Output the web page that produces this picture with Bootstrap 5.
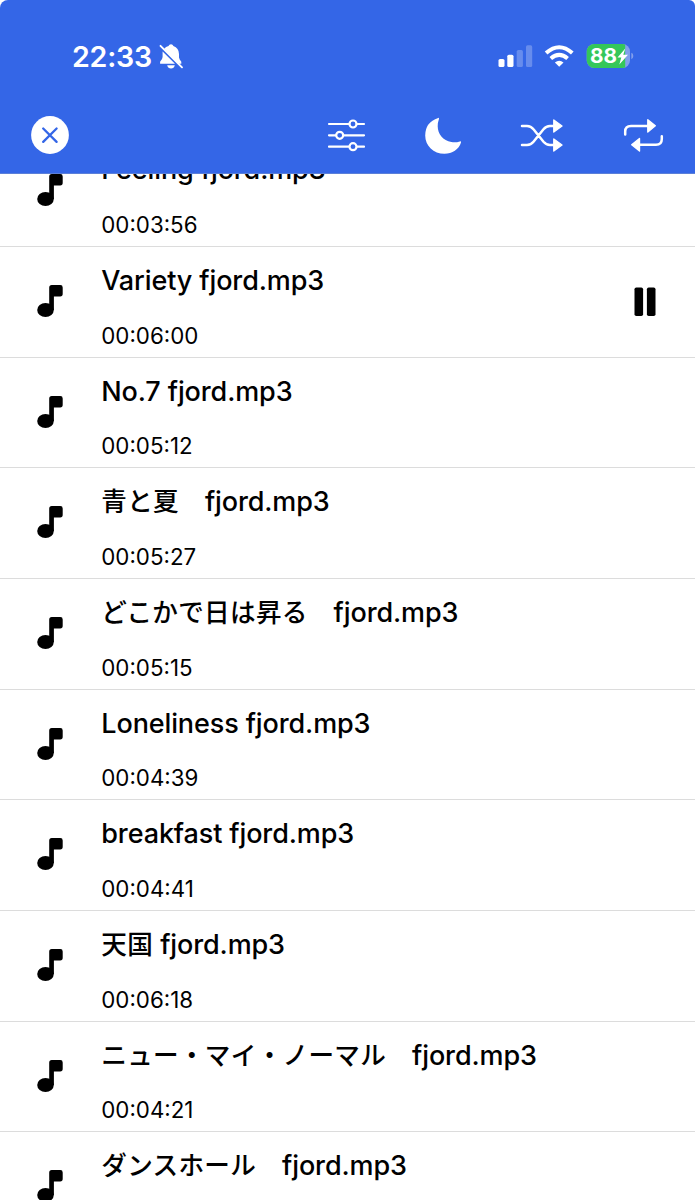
<!DOCTYPE html>
<html lang="ja">
<head>
<meta charset="utf-8">
<meta name="viewport" content="width=device-width, initial-scale=1">
<title>Music</title>
<link href="https://cdn.jsdelivr.net/npm/bootstrap@5.3.0/dist/css/bootstrap.min.css" rel="stylesheet">
<style>
body{font-family:Inter,"Noto Sans CJK JP",sans-serif;color:#000;background:#fff;height:1200px}
.screen{width:695px;height:1200px}
.top-bar{height:174px;background:#3466e7;border-top-left-radius:8px;border-top-right-radius:6px;border-bottom:1px solid #5b7fd8;z-index:2}
.status{height:84px;padding:28px 61px 0 72px}
.clock{font-size:28.6px;font-weight:600;line-height:57px;letter-spacing:-.25px;width:82px;white-space:nowrap}
.tools{height:90px;padding:7px 31px 0}
.tool{border:0;background:none;color:#fff;padding:0;line-height:0}
.tracks{margin-top:-37.6px}
.track{height:110.67px;border:0;border-bottom:1.4px solid #dcdcdc;border-radius:0;padding:0 39px 0 36px;color:#000;background:#fff}
.note{margin-top:37px;width:28px}
.track-text{margin-left:37.3px}
.track-name{font-size:27px;font-weight:500;line-height:36px;height:36px;margin-top:16px;white-space:pre;letter-spacing:-.12px}
.jp{font-size:25.6px;font-weight:500;line-height:1;letter-spacing:.3px}
.track-time{font-size:22.3px;line-height:30px;margin-top:21.5px;letter-spacing:0}
.pause{margin-top:40.4px}
svg{display:block;flex:none}
</style>
</head>
<body>
<svg width="0" height="0" class="position-absolute"><defs>
<symbol id="note" viewBox="0 0 28 34"><ellipse cx="9.5" cy="26" rx="8.3" ry="7"/><path d="M13.2 26V3.5Q13.2 1 15.7 1H24.3Q26.7 1 26.7 3.4V9.8Q26.7 12.4 24.2 12.4H17.9V26Z"/></symbol>
</defs></svg>
<div class="screen d-flex flex-column overflow-hidden">
<header class="top-bar position-relative flex-shrink-0 text-white">
 <div class="status d-flex align-items-start">
  <div class="clock">22:33</div>
  <svg style="margin:15px 0 0 3px" width="28" height="28" viewBox="0 0 28 28" fill="#fff"><path d="M7.2 5.8Q8.8 3.6 11.5 3Q12.2 1.2 14 1.2Q15.8 1.2 16.4 3Q21.8 4.8 22 11V14.5Q22.3 16.3 24.3 18.7V20.7H21.2ZM5.6 8.4L18 20.7H3.1V18.7Q5.5 16.4 5.6 14Z"/><path d="M10.2 22.3H17.8Q17 25.6 14 25.6Q11 25.6 10.2 22.3Z"/><path d="M3.5 2.8L25 24.3" stroke="#fff" stroke-width="1.9" stroke-linecap="round"/></svg>
  <div class="d-flex ms-auto" style="margin-top:15px">
   <svg width="35" height="26" viewBox="498 43 35 26" fill="#fff"><rect x="498.5" y="59" width="6" height="8" rx="1.6"/><rect x="507.3" y="54.7" width="6.2" height="12.3" rx="1.6"/><g opacity=".25"><rect x="516.7" y="50" width="6.2" height="17" rx="1.6"/><rect x="526" y="45.3" width="6.2" height="21.7" rx="1.6"/></g></svg>
   <svg style="margin-left:11px" width="31" height="26" viewBox="544 43 31 26" fill="none" stroke="#fff" stroke-width="4"><path d="M546.1 53.1Q559.2 41.4 572.3 53.1M550.8 58.5Q559.2 51.3 567.6 58.5"/><path d="M554.9 62.6Q559.2 58.9 563.5 62.6L559.2 66.8Z" fill="#fff" stroke="none"/></svg>
   <svg style="margin-left:11px" width="48" height="26" viewBox="586 43 48 26"><defs><clipPath id="bat"><rect x="586.7" y="44" width="43.3" height="24" rx="7.5"/></clipPath></defs><g clip-path="url(#bat)"><rect x="586" y="43" width="44" height="26" fill="#829fec"/><rect x="586" y="43" width="39.2" height="26" fill="#34c759"/></g><path d="M631.3 52.7Q633.3 53.3 633.3 56Q633.3 58.7 631.3 59.3Z" fill="#829fec"/><text x="590" y="63.3" font-family="Inter" font-weight="700" font-size="20.3" textLength="27" lengthAdjust="spacingAndGlyphs" fill="#fff">88</text><path d="M625.3 48.5L617.5 57.5H621.3L619.3 64.5L628 54.7H623.3Z" fill="#fff"/></svg>
  </div>
 </div>
 <nav class="tools d-flex align-items-start">
  <button class="tool" style="margin-top:25px" aria-label="閉じる"><svg width="38" height="38" viewBox="0 0 38 38"><circle cx="19" cy="19" r="18.9" fill="#fff"/><path d="M12.2 12.5L25.6 25.9M25.6 12.5L12.2 25.9" stroke="#3466e7" stroke-width="2.3" stroke-linecap="round"/></svg></button>
  <button class="tool" style="margin:26px 0 0 258px" aria-label="イコライザー"><svg width="40" height="36" viewBox="327 117 40 36" fill="#3466e7" stroke="#fff" stroke-width="2.2" stroke-linecap="round"><path d="M329 124H364M329 135.3H364M329 146.7H364"/><circle cx="353" cy="124" r="3.5"/><circle cx="339.7" cy="135.3" r="3.5"/><circle cx="353" cy="146.7" r="3.5"/></svg></button>
  <button class="tool" style="margin:26px 0 0 57px" aria-label="ダークモード"><svg width="38" height="38" viewBox="424 117 38 38"><path d="M438.2 117.9Q425.2 122.2 425.2 135.4C425.2 145.7 433.5 153.8 444.5 153.8C452.2 153.8 458.9 149.4 461 142.5Q461.3 141 459.8 141.4Q455.5 142.8 451.4 142C443 140.5 437.7 134 437.7 126.2Q437.7 122.3 438.9 119.2Q439.3 117.5 438.2 117.9Z" fill="#fff"/></svg></button>
  <button class="tool" style="margin:26px 0 0 58px" aria-label="シャッフル"><svg width="44" height="38" viewBox="520 117 44 38" fill="none" stroke="#fff" stroke-width="2.5" stroke-linecap="round"><path d="M522 126H527Q531 126 533.5 129.3L543.5 141.8Q546.2 145 550 145H554M522 145H527Q531 145 533.5 141.8L543.5 129.3Q546.2 126 550 126H554"/><path d="M553.8 120L562 126L553.8 132ZM553.8 139L562 145L553.8 151Z" fill="#fff" stroke-width="1.4" stroke-linejoin="round"/></svg></button>
  <button class="tool" style="margin:26px 0 0 59px" aria-label="リピート"><svg width="42" height="38" viewBox="623 117 42 38" fill="none" stroke="#fff" stroke-width="2.5" stroke-linecap="round"><path d="M625.2 134.5V131.5Q625.2 126 631 126H648M661.8 136.2V139Q661.8 144.8 656 144.8H639"/><path d="M647.8 119.7L655.3 125.7L647.8 132ZM639.5 138.5L631.7 144.8L639.5 151Z" fill="#fff" stroke-width="1.4" stroke-linejoin="round"/></svg></button>
 </nav>
</header>
<main class="tracks list-group list-group-flush flex-shrink-0">
<div class="track list-group-item d-flex align-items-start"><svg class="note" height="34"><use href="#note"/></svg><div class="track-text"><div class="track-name">Feeling fjord.mp3</div><div class="track-time">00:03:56</div></div></div>
<div class="track list-group-item d-flex align-items-start"><svg class="note" height="34"><use href="#note"/></svg><div class="track-text"><div class="track-name">Variety fjord.mp3</div><div class="track-time">00:06:00</div></div><svg class="pause ms-auto" width="22" height="30"><rect x=".5" y=".5" width="8.6" height="28.5" rx="1.8"/><rect x="12.9" y=".5" width="8.6" height="28.5" rx="1.8"/></svg></div>
<div class="track list-group-item d-flex align-items-start"><svg class="note" height="34"><use href="#note"/></svg><div class="track-text"><div class="track-name">No.7 fjord.mp3</div><div class="track-time">00:05:12</div></div></div>
<div class="track list-group-item d-flex align-items-start"><svg class="note" height="34"><use href="#note"/></svg><div class="track-text"><div class="track-name"><span class="jp">青と夏　</span>fjord.mp3</div><div class="track-time">00:05:27</div></div></div>
<div class="track list-group-item d-flex align-items-start"><svg class="note" height="34"><use href="#note"/></svg><div class="track-text"><div class="track-name"><span class="jp">どこかで日は昇る　</span>fjord.mp3</div><div class="track-time">00:05:15</div></div></div>
<div class="track list-group-item d-flex align-items-start"><svg class="note" height="34"><use href="#note"/></svg><div class="track-text"><div class="track-name">Loneliness fjord.mp3</div><div class="track-time">00:04:39</div></div></div>
<div class="track list-group-item d-flex align-items-start"><svg class="note" height="34"><use href="#note"/></svg><div class="track-text"><div class="track-name">breakfast fjord.mp3</div><div class="track-time">00:04:41</div></div></div>
<div class="track list-group-item d-flex align-items-start"><svg class="note" height="34"><use href="#note"/></svg><div class="track-text"><div class="track-name"><span class="jp">天国</span> fjord.mp3</div><div class="track-time">00:06:18</div></div></div>
<div class="track list-group-item d-flex align-items-start"><svg class="note" height="34"><use href="#note"/></svg><div class="track-text"><div class="track-name"><span class="jp">ニュー・マイ・ノーマル　</span>fjord.mp3</div><div class="track-time">00:04:21</div></div></div>
<div class="track list-group-item d-flex align-items-start"><svg class="note" height="34"><use href="#note"/></svg><div class="track-text"><div class="track-name"><span class="jp">ダンスホール　</span>fjord.mp3</div></div></div>
</main>
</div>
<script src="https://cdn.jsdelivr.net/npm/bootstrap@5.3.0/dist/js/bootstrap.bundle.min.js"></script>
</body>
</html>
